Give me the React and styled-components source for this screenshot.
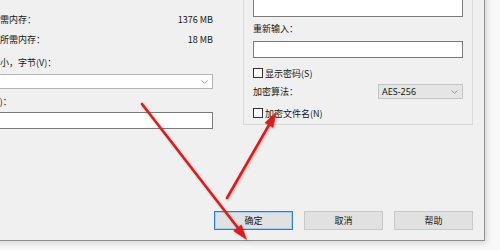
import React from 'react';
import styled, { createGlobalStyle } from 'styled-components';

const GlobalStyle = createGlobalStyle`
    html, body {
        margin: 0;
        padding: 0;
        background: #f8f8f8;
    }
    body {
        font-family: "Noto Sans CJK SC", "Noto Sans", sans-serif;
        font-size: 9px;
        color: #151515;
    }
`;

const Stage = styled.div`
    position: relative;
    width: 500px;
    height: 250px;
    overflow: hidden;
    background: #f8f8f8;
`;

const Window = styled.div`
    box-sizing: border-box;
    width: 516px;
    height: 271px;
    margin-left: -31px;
    margin-top: -30px;
    padding: 4px 11px 10px 4px;
    display: flex;
    flex-direction: column;
    background: #f0f0f0;
    border-right: 1px solid #8f8f8f;
    border-bottom: 1px solid #8f8f8f;
    box-shadow: 2px 2px 6px rgba(0, 0, 0, 0.14);
`;

const Main = styled.div`
    display: flex;
    gap: 30px;
    align-items: flex-start;
`;

const LeftColumn = styled.div`
    width: 240px;
    padding-top: 39px;
    display: flex;
    flex-direction: column;
`;

const InfoRow = styled.div`
    display: flex;
    justify-content: space-between;
    height: 14px;
    line-height: 14px;
    margin-top: ${p => p.$gap || 0}px;
    white-space: nowrap;
`;

const Label = styled.div`
    height: 14px;
    line-height: 14px;
    margin-top: ${p => p.$gap || 0}px;
    white-space: nowrap;
`;

const TextBox = styled.div`
    box-sizing: border-box;
    height: ${p => p.$h || 17}px;
    margin-top: ${p => p.$gap || 0}px;
    background: #fff;
    border: 1px solid #7a7a7a;
`;

const Combo = styled.div`
    box-sizing: border-box;
    height: 15px;
    margin-top: ${p => p.$gap || 0}px;
    display: flex;
    align-items: center;
    justify-content: flex-end;
    padding-right: 4px;
    background: #fff;
    border: 1px solid #b4b4b4;
`;

const GroupBox = styled.div`
    box-sizing: border-box;
    width: 230px;
    padding: 24px 9px 5px;
    display: flex;
    flex-direction: column;
    border: 1px solid #d9d9d9;
`;

const CheckRow = styled.div`
    display: flex;
    align-items: center;
    gap: 2px;
    height: 12px;
    margin-top: ${p => p.$gap || 0}px;
    white-space: nowrap;
`;

const Box = styled.span`
    box-sizing: border-box;
    width: 10px;
    height: 10px;
    background: #fff;
    border: 1px solid #333;
`;

const SelectRow = styled.div`
    display: flex;
    justify-content: space-between;
    align-items: center;
    margin-top: ${p => p.$gap || 0}px;
`;

const Select = styled.div`
    box-sizing: border-box;
    width: 85px;
    height: 15px;
    padding: 0 4px 0 3px;
    display: flex;
    align-items: center;
    justify-content: space-between;
    background: #e5e5e5;
    border: 1px solid #c4c4c4;
    font-family: "Noto Sans", sans-serif;
`;

const ButtonRow = styled.div`
    margin-top: auto;
    display: flex;
    justify-content: flex-end;
    gap: 11px;
`;

const Button = styled.div`
    box-sizing: border-box;
    width: 79px;
    height: 19px;
    display: flex;
    align-items: center;
    justify-content: center;
    background: #e1e1e1;
    border: 1px solid ${p => (p.$primary ? '#2a7fd0' : '#c9c9c9')};
    box-shadow: ${p => (p.$primary ? 'inset 0 0 0 1px #a9cdee' : 'none')};
`;

const Overlay = styled.svg`
    position: absolute;
    left: 0;
    top: 0;
    pointer-events: none;
`;

const Chevron = () => (
    <svg width="7" height="4" viewBox="0 0 7 4">
        <path d="M0.5 0.5 L3.5 3.2 L6.5 0.5" fill="none" stroke="#8a8a8a" strokeWidth="0.9" />
    </svg>
);

const Arrows = () => (
    <Overlay width="500" height="250" viewBox="0 0 500 250">
        <defs>
            <filter id="shade" x="-10%" y="-10%" width="130%" height="130%">
                <feDropShadow dx="1" dy="1" stdDeviation="1" floodColor="#000" floodOpacity="0.25" />
            </filter>
        </defs>
        <g filter="url(#shade)" fill="#d91f1f" stroke="#d91f1f">
            <line x1="142" y1="104" x2="238" y2="228" strokeWidth="2.6" strokeLinecap="round" />
            <polygon points="246.5,239.5 233.6,230.9 241.4,224.8" strokeWidth="0.5" />
            <line x1="227" y1="198" x2="269" y2="125" strokeWidth="2.6" strokeLinecap="round" />
            <polygon points="276,112.5 273.1,127.6 264.9,122.8" strokeWidth="0.5" />
        </g>
    </Overlay>
);

const App = () => {
    return (
        <Stage>
            <GlobalStyle />
            <Window>
                <Main>
                    <LeftColumn>
                        <InfoRow>
                            <span>压缩所需内存：</span>
                            <span>1376 MB</span>
                        </InfoRow>
                        <InfoRow $gap={6}>
                            <span>解压缩所需内存：</span>
                            <span>18 MB</span>
                        </InfoRow>
                        <Label $gap={9}>分卷大小，字节(V)：</Label>
                        <Combo $gap={4}><Chevron /></Combo>
                        <Label $gap={6}>参数(P)：</Label>
                        <TextBox $gap={3} />
                    </LeftColumn>
                    <GroupBox>
                        <TextBox $h={18} />
                        <Label $gap={5}>重新输入：</Label>
                        <TextBox $gap={5} />
                        <CheckRow $gap={9}>
                            <Box />
                            <span>显示密码(S)</span>
                        </CheckRow>
                        <SelectRow $gap={5}>
                            <span>加密算法：</span>
                            <Select>
                                <span>AES-256</span>
                                <Chevron />
                            </Select>
                        </SelectRow>
                        <CheckRow $gap={8}>
                            <Box />
                            <span>加密文件名(N)</span>
                        </CheckRow>
                    </GroupBox>
                </Main>
                <ButtonRow>
                    <Button $primary>确定</Button>
                    <Button>取消</Button>
                    <Button>帮助</Button>
                </ButtonRow>
            </Window>
            <Arrows />
        </Stage>
    );
};

export default App;
